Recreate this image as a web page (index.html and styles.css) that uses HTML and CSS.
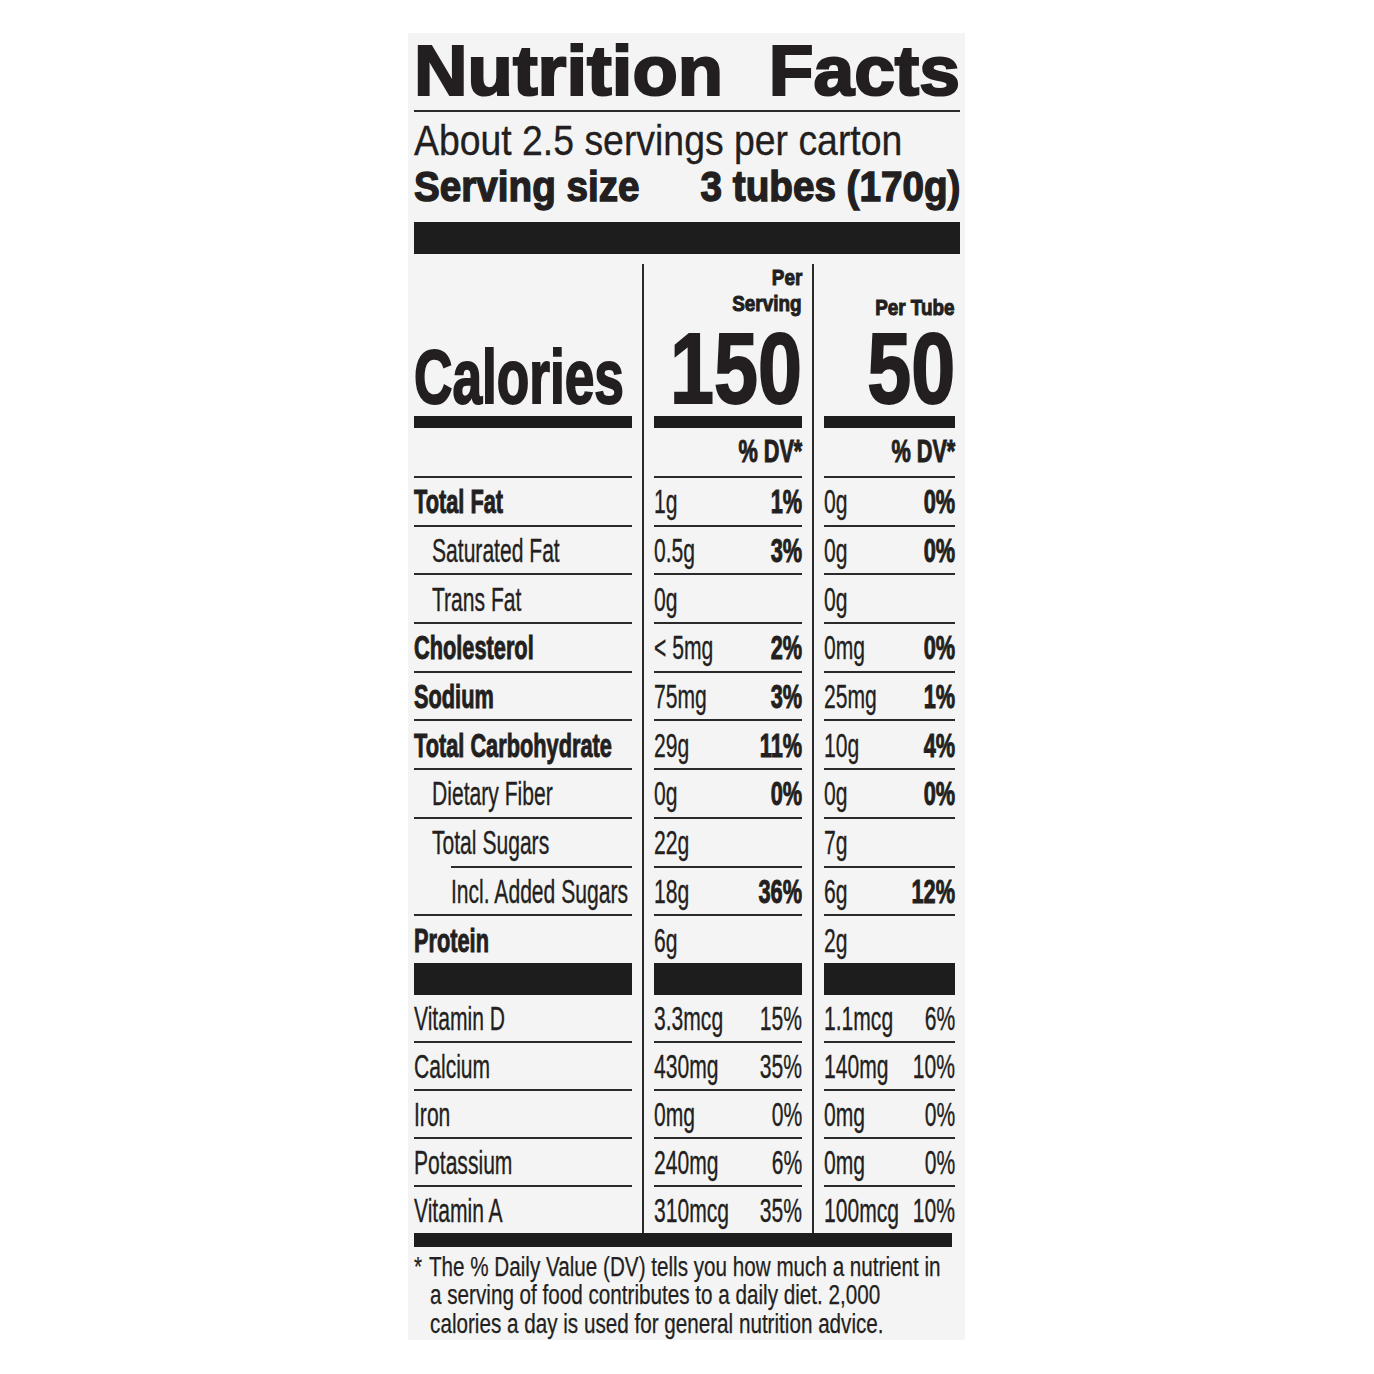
FILE: index.html
```html
<!DOCTYPE html>
<html lang="en">
<head>
<meta charset="utf-8">
<title>Nutrition Facts</title>
<link rel="stylesheet" href="styles.css">
</head>
<body>
<main class="label">
  <header class="title"><span class="x w1">Nutrition</span><span class="x w2 r">Facts</span></header>
  <p class="servings"><span class="x sv">About 2.5 servings per carton</span></p>
  <p class="size"><span class="x sz">Serving size</span><span class="x sz r">3 tubes (170g)</span></p>
  <div class="bar-top"></div>

  <section class="facts">
    <div class="vl vl1"></div>
    <div class="vl vl2"></div>

    <div class="c1 head left"><span class="x cal">Calories</span></div>
    <div class="c2 head"><span class="x per r">Per</span><span class="x per sg r">Serving</span><span class="x big r">150</span></div>
    <div class="c3 head"><span class="x per pt r">Per Tube</span><span class="x big r">50</span></div>

    <div class="c1 cell"></div>
    <div class="c2 cell"><span class="x dv r">% DV*</span></div>
    <div class="c3 cell"><span class="x dv r">% DV*</span></div>

    <div class="c1 cell ln"><span class="x nb">Total Fat</span></div>
    <div class="c2 cell ln"><span class="x n">1g</span><span class="x nb r">1%</span></div>
    <div class="c3 cell ln"><span class="x n">0g</span><span class="x nb r">0%</span></div>

    <div class="c1 cell ln i1"><span class="x n">Saturated Fat</span></div>
    <div class="c2 cell ln"><span class="x n">0.5g</span><span class="x nb r">3%</span></div>
    <div class="c3 cell ln"><span class="x n">0g</span><span class="x nb r">0%</span></div>

    <div class="c1 cell ln i1"><span class="x n">Trans Fat</span></div>
    <div class="c2 cell ln"><span class="x n">0g</span></div>
    <div class="c3 cell ln"><span class="x n">0g</span></div>

    <div class="c1 cell ln"><span class="x nb">Cholesterol</span></div>
    <div class="c2 cell ln"><span class="x n">&lt; 5mg</span><span class="x nb r">2%</span></div>
    <div class="c3 cell ln"><span class="x n">0mg</span><span class="x nb r">0%</span></div>

    <div class="c1 cell ln"><span class="x nb">Sodium</span></div>
    <div class="c2 cell ln"><span class="x n">75mg</span><span class="x nb r">3%</span></div>
    <div class="c3 cell ln"><span class="x n">25mg</span><span class="x nb r">1%</span></div>

    <div class="c1 cell ln"><span class="x nb">Total Carbohydrate</span></div>
    <div class="c2 cell ln"><span class="x n">29g</span><span class="x nb r">11%</span></div>
    <div class="c3 cell ln"><span class="x n">10g</span><span class="x nb r">4%</span></div>

    <div class="c1 cell ln i1"><span class="x n">Dietary Fiber</span></div>
    <div class="c2 cell ln"><span class="x n">0g</span><span class="x nb r">0%</span></div>
    <div class="c3 cell ln"><span class="x n">0g</span><span class="x nb r">0%</span></div>

    <div class="c1 cell ln i1"><span class="x n">Total Sugars</span></div>
    <div class="c2 cell ln"><span class="x n">22g</span></div>
    <div class="c3 cell ln"><span class="x n">7g</span></div>

    <div class="c1 cell ln i2"><span class="x n">Incl. Added Sugars</span></div>
    <div class="c2 cell ln"><span class="x n">18g</span><span class="x nb r">36%</span></div>
    <div class="c3 cell ln"><span class="x n">6g</span><span class="x nb r">12%</span></div>

    <div class="c1 cell ln"><span class="x nb">Protein</span></div>
    <div class="c2 cell ln"><span class="x n">6g</span></div>
    <div class="c3 cell ln"><span class="x n">2g</span></div>

    <div class="c1 blk"></div>
    <div class="c2 blk"></div>
    <div class="c3 blk"></div>

    <div class="c1 cell"><span class="x n">Vitamin D</span></div>
    <div class="c2 cell"><span class="x n">3.3mcg</span><span class="x n r">15%</span></div>
    <div class="c3 cell"><span class="x n">1.1mcg</span><span class="x n r">6%</span></div>

    <div class="c1 cell ln"><span class="x n">Calcium</span></div>
    <div class="c2 cell ln"><span class="x n">430mg</span><span class="x n r">35%</span></div>
    <div class="c3 cell ln"><span class="x n">140mg</span><span class="x n r">10%</span></div>

    <div class="c1 cell ln"><span class="x n">Iron</span></div>
    <div class="c2 cell ln"><span class="x n">0mg</span><span class="x n r">0%</span></div>
    <div class="c3 cell ln"><span class="x n">0mg</span><span class="x n r">0%</span></div>

    <div class="c1 cell ln"><span class="x n">Potassium</span></div>
    <div class="c2 cell ln"><span class="x n">240mg</span><span class="x n r">6%</span></div>
    <div class="c3 cell ln"><span class="x n">0mg</span><span class="x n r">0%</span></div>

    <div class="c1 cell ln"><span class="x n">Vitamin A</span></div>
    <div class="c2 cell ln"><span class="x n">310mcg</span><span class="x n r">35%</span></div>
    <div class="c3 cell ln"><span class="x n">100mcg</span><span class="x n r">10%</span></div>
  </section>

  <div class="bar-bot"></div>
  <p class="fn"><span class="ast">*</span> The % Daily Value (DV) tells you how much a nutrient in<br>a serving of food contributes to a daily diet. 2,000<br>calories a day is used for general nutrition advice.</p>
</main>
</body>
</html>
```

FILE: styles.css
```css
* { box-sizing: border-box; margin: 0; padding: 0; }
html, body { background: #ffffff; }
body {
  font-family: "Liberation Sans", Arial, sans-serif;
  color: #231f20;
}

.label {
  width: 557px;
  height: 1307px;
  margin: 33px 0 0 408px;
  padding: 0 5px 0 6px;
  background: #f4f4f4;
  overflow: hidden;
}

/* scaled text */
.x { display: inline-block; white-space: nowrap; transform-origin: left center; }
.r { transform-origin: right center; margin-left: -300px; }

/* title */
.title {
  display: flex;
  justify-content: space-between;
  height: 79px;
  border-bottom: 2px solid #2a2a2a;
  font-size: 70px;
  line-height: 77px;
  font-weight: 700;
  -webkit-text-stroke: 2.2px #231f20;
}
.w1 { transform: scaleX(1.06); }
.w2 { transform: scaleX(1.045); }

.servings {
  margin-top: 6px;
  height: 46px;
  font-size: 42px;
  line-height: 46px;
}
.sv { transform: scaleX(.89); -webkit-text-stroke: .3px #231f20; }

.size {
  display: flex;
  justify-content: space-between;
  height: 46px;
  font-size: 42px;
  line-height: 46px;
  font-weight: 700;
  -webkit-text-stroke: 1.4px #231f20;
}
.sz { transform: scaleX(.92); }

.bar-top { height: 32px; margin-top: 12px; background: #1d1d1d; }

/* facts grid */
.facts {
  display: grid;
  margin-top: 10px;
  grid-template-columns: 218px 2px 148px 2px 131px;
  column-gap: 10px;
  grid-template-rows: 164px 48px repeat(10, 48.7px) 32px 46px repeat(4, 48px);
}
.vl { grid-row: 1 / -1; background: #2a2a2a; }
.vl1 { grid-column: 2; }
.vl2 { grid-column: 4; }
.c1 { grid-column: 1; }
.c2 { grid-column: 3; }
.c3 { grid-column: 5; }

.head {
  display: flex;
  flex-direction: column;
  justify-content: flex-end;
  align-items: flex-end;
  border-bottom: 12px solid #1d1d1d;
  font-weight: 700;
}
.head.left { align-items: flex-start; padding-bottom: 1px; }
.cal { font-size: 76px; line-height: 76px; transform: scaleX(.70); -webkit-text-stroke: 2px #231f20; }
.per { font-size: 22.5px; line-height: 26px; transform: scaleX(.84); -webkit-text-stroke: 1px #231f20; }
.sg { margin-bottom: 3px; }
.pt { margin-bottom: -1px; }
.big { font-size: 100px; line-height: 96px; transform: scaleX(.79); -webkit-text-stroke: 2px #231f20; }

.cell {
  display: grid;
  align-items: center;
  font-size: 34px;
  line-height: 34px;
}
.cell > span { grid-area: 1 / 1; justify-self: start; }
.cell > .r { justify-self: end; }
.ln { border-top: 2px solid #2a2a2a; }
.i1 { padding-left: 18px; }
.i2 { margin-left: 37px; }

.n { transform: scaleX(.62); -webkit-text-stroke: .35px #231f20; }
.nb { transform: scaleX(.64); font-weight: 700; -webkit-text-stroke: 1px #231f20; }
.dv { font-size: 31px; transform: scaleX(.70); font-weight: 700; -webkit-text-stroke: 1px #231f20; }

.blk { background: #1d1d1d; }

.bar-bot { width: 538px; height: 14px; background: #1d1d1d; }

.fn {
  margin-top: 6px;
  padding-left: 21px;
  text-indent: -21px;
  font-size: 27px;
  line-height: 28.5px;
  white-space: nowrap;
  transform: scaleX(.765);
  transform-origin: left top;
  -webkit-text-stroke: .25px #231f20;
}
.ast { margin-right: 2px; }
```
